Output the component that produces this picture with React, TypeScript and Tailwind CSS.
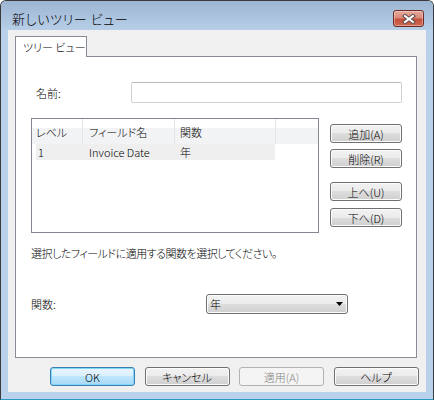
import React from "react";

type Variant = "normal" | "default" | "disabled";

const variantClass: Record<Variant, string> = {
  normal:
    "border-[#707070] bg-[linear-gradient(to_bottom,#f2f2f2_0%,#ebebeb_50%,#dddddd_50%,#cfcfcf_100%)] text-black shadow-[inset_0_0_0_1px_#fcfcfc]",
  default:
    "border-[#3c7fb1] bg-[linear-gradient(to_bottom,#eaf6fd_0%,#d9f0fc_50%,#bee6fd_50%,#a7d9f5_100%)] text-black shadow-[inset_0_0_0_1px_#7fd6f7]",
  disabled: "border-[#adb2b5] bg-[#f4f4f4] text-[#838383]",
};

function WinButton({
  children,
  className = "",
  variant = "normal",
}: {
  children: React.ReactNode;
  className?: string;
  variant?: Variant;
}) {
  return (
    <div
      className={`flex items-center justify-center whitespace-nowrap rounded-[3px] border leading-[14px] ${variantClass[variant]} ${className}`}
    >
      {children}
    </div>
  );
}

function CloseButton() {
  return (
    <div className="mt-[9px] flex h-[17px] w-[31px] items-center justify-center rounded-[3px] border border-[#6e2a22] bg-[linear-gradient(to_bottom,#e6a89b_0%,#d98a78_45%,#c4503c_55%,#d06a52_100%)] shadow-[inset_0_0_0_1px_rgba(255,255,255,0.35)]">
      <svg width="14" height="10" viewBox="0 0 14 10">
        <path d="M3 2 L11 8 M11 2 L3 8" stroke="#5a4a48" strokeWidth="4" strokeLinecap="square" />
        <path d="M3 2 L11 8 M11 2 L3 8" stroke="#ffffff" strokeWidth="2" strokeLinecap="square" />
      </svg>
    </div>
  );
}

export default function App() {
  return (
    <div className="font-['Noto_Sans_CJK_JP',sans-serif] text-[11px] font-light leading-[14px] text-black [font-feature-settings:'palt']">
      <div className="flex h-[400px] w-[434px] flex-col overflow-hidden rounded-t-[6px] border border-[#3a3a3a] border-b-[#2a9cc4] bg-[#b9d1ea]">
        {/* Title bar */}
        <div className="flex h-[29px] items-start justify-between bg-[linear-gradient(to_bottom,#9cb5d2,#b7cee7)] pl-[11px] pr-[9px]">
          <div className="mt-[10px] whitespace-nowrap text-[13px] leading-[16px] tracking-[0.6px]">新しいツリー ビュー</div>
          <CloseButton />
        </div>

        {/* Frame + client */}
        <div className="flex h-[362px]">
          <div className="w-[7px]" />
          <div className="flex w-[418px] flex-col bg-[#f0f0f0]">
            {/* Tab */}
            <div className="pl-[7px] pt-[6px]">
              <div className="relative z-10 -mb-px flex h-[21px] w-[72px] items-center whitespace-nowrap border border-b-0 border-[#898c95] bg-white pl-[7px]">
                ツリー ビュー
              </div>
            </div>

            {/* Tab panel */}
            <div className="ml-[7px] flex h-[302px] w-[402px] flex-col border border-[#898c95] bg-white pl-[15px]">
              {/* Name row */}
              <div className="mt-[25px] flex h-[21px] items-center">
                <div className="w-[100px] pl-[5px]">名前:</div>
                <div className="h-[21px] w-[271px] rounded-[2px] border border-[#cdd2d9] border-t-[#b5b9c0] bg-white" />
              </div>

              {/* List + side buttons */}
              <div className="mt-[15px] flex">
                <div className="flex h-[115px] w-[288px] flex-col border border-[#828790] bg-white">
                  <div className="flex h-[25px] whitespace-nowrap bg-[linear-gradient(to_bottom,#ffffff_0%,#ffffff_38%,#f2f3f5_38%,#f2f3f5_100%)]">
                    <div className="flex w-[51px] items-center border-r border-[#e3e4e6] pl-[4px]">レベル</div>
                    <div className="flex w-[92px] items-center border-r border-[#e3e4e6] pl-[6px]">フィールド名</div>
                    <div className="flex w-[101px] items-center border-r border-[#e3e4e6] pl-[5px]">関数</div>
                    <div className="flex-1" />
                  </div>
                  <div className="ml-[4px] flex h-[16px] w-[239px] items-center whitespace-nowrap bg-[#efefef]">
                    <div className="w-[47px] pl-[2px]">1</div>
                    <div className="w-[92px] pl-[6px]">Invoice Date</div>
                    <div className="pl-[5px]">年</div>
                  </div>
                </div>

                <div className="ml-[11px] flex flex-col pt-[6px]">
                  <WinButton className="h-[19px] w-[72px]">追加(A)</WinButton>
                  <WinButton className="mt-[6px] h-[19px] w-[72px]">削除(R)</WinButton>
                  <WinButton className="mt-[14px] h-[19px] w-[72px]">上へ(U)</WinButton>
                  <WinButton className="mt-[7px] h-[19px] w-[72px]">下へ(D)</WinButton>
                </div>
              </div>

              {/* Instruction */}
              <div className="mt-[13px] whitespace-nowrap tracking-[-0.5px]">選択したフィールドに適用する関数を選択してください。</div>

              {/* Function row */}
              <div className="mt-[34px] flex h-[20px] items-center">
                <div className="w-[175px]">関数:</div>
                <div className="flex h-[20px] w-[142px] items-center justify-between rounded-[3px] border border-[#707070] bg-[linear-gradient(to_bottom,#f2f2f2_0%,#ebebeb_50%,#dddddd_50%,#cfcfcf_100%)] pl-[3px] pr-[4px] shadow-[inset_0_0_0_1px_#fcfcfc]">
                  <span>年</span>
                  <svg width="7" height="4" viewBox="0 0 7 4">
                    <path d="M0 0 H7 L3.5 4 Z" fill="#000" />
                  </svg>
                </div>
              </div>
            </div>

            {/* Bottom buttons */}
            <div className="mt-[9px] flex gap-[9.5px] pl-[42px]">
              <WinButton variant="default" className="h-[19px] w-[85px]">OK</WinButton>
              <WinButton className="h-[19px] w-[85px]">キャンセル</WinButton>
              <WinButton variant="disabled" className="h-[19px] w-[85px]">適用(A)</WinButton>
              <WinButton className="h-[19px] w-[85px]">ヘルプ</WinButton>
            </div>
          </div>
          <div className="w-[7px]" />
        </div>
      </div>
    </div>
  );
}
